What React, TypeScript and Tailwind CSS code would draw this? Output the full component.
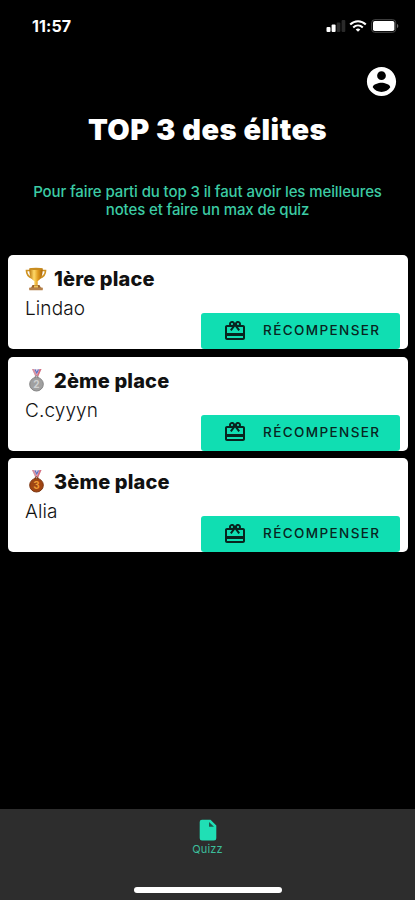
import type { ReactNode } from 'react'

type Place = {
  title: string
  name: string
  icon: ReactNode
}

function TrophyIcon() {
  return (
    <svg viewBox="0 0 22 24" className="h-6 w-[22px]" aria-hidden="true">
      <defs>
        <linearGradient id="cup" x1="0" x2="1" y1="0" y2="0">
          <stop offset="0" stopColor="#b8740a" />
          <stop offset="0.35" stopColor="#ffd968" />
          <stop offset="0.65" stopColor="#e09a1c" />
          <stop offset="1" stopColor="#a86408" />
        </linearGradient>
      </defs>
      <path d="M5 3.500H1.500c0 3.700 2 6.500 6 7.700M17 3.500h3.500c0 3.700-2 6.500-6 7.700" fill="none" stroke="#cf9322" strokeWidth="1.700" />
      <path d="M4.300 1.500h13.400c0 7-1.500 10.500-5 12.500v4.500H9.300V14C5.800 12 4.300 8.500 4.300 1.500z" fill="url(#cup)" />
      <ellipse cx="11" cy="1.900" rx="6.600" ry="1.100" fill="#c98d20" />
      <path d="M7.500 18h7l1.500 3H6z" fill="#9a6228" />
      <rect x="4.200" y="20.600" width="13.600" height="2.700" rx="0.600" fill="#b5804a" />
      <rect x="9" y="18.500" width="4" height="2" fill="#f0c35a" />
    </svg>
  )
}

function MedalIcon({ rank, fill, rim, ink }: { rank: string; fill: string; rim: string; ink: string }) {
  return (
    <svg viewBox="0 0 22 24" className="h-6 w-[22px]" aria-hidden="true">
      <path d="M7 0h9.500l-3.700 8h-2.300z" fill="#dcd3e6" />
      <path d="M7 0h2l3 6-1.300 2z" fill="#d9929f" />
      <path d="M14.500 0h2l-3.500 8-1-2z" fill="#d7707f" />
      <path d="M10 0.500l1.800 3.500 1.700-3.500" fill="none" stroke="#5f6fc0" strokeWidth="1.200" />
      <circle cx="11.500" cy="8.300" r="1.500" fill="none" stroke={rim} strokeWidth="1" />
      <circle cx="11.500" cy="15.200" r="6.800" fill={fill} stroke={rim} strokeWidth="1" />
      <text x="11.500" y="18.800" textAnchor="middle" fontSize="10" fontWeight="700" fontFamily="Inter, sans-serif" fill={ink}>
        {rank}
      </text>
    </svg>
  )
}

const places: Place[] = [
  { title: '1ère place', name: 'Lindao', icon: <TrophyIcon /> },
  { title: '2ème place', name: 'C.cyyyn', icon: <MedalIcon rank="2" fill="#a0a0a0" rim="#858585" ink="#d0d0d0" /> },
  { title: '3ème place', name: 'Alia', icon: <MedalIcon rank="3" fill="#a04512" rim="#7c3510" ink="#ef9a35" /> },
]

function StatusBar() {
  return (
    <div className="flex h-[52px] items-center justify-between pr-4 pl-8">
      <span className="text-[16px] leading-5 font-bold tracking-[0.1px]">11:57</span>
      <div className="flex items-center">
        <svg viewBox="0 0 20 14" className="h-3.5 w-5" fill="#fff" aria-hidden="true">
          <rect x="0.500" y="8" width="4" height="5" rx="1" />
          <rect x="5.600" y="5.500" width="4" height="7.500" rx="1" />
          <rect x="10.700" y="3.500" width="3.700" height="9.500" rx="1" fill="#2a2a2a" />
          <rect x="15.600" y="1" width="3.700" height="12" rx="1" fill="#2a2a2a" />
        </svg>
        <svg viewBox="0 0 18 14" className="ml-[3px] h-3.5 w-[18px]" fill="none" stroke="#fff" strokeWidth="2.100" aria-hidden="true">
          <path d="M1.200 5.400c4.500-4.300 11.100-4.300 15.600 0" />
          <path d="M4.200 8.400c2.800-2.600 6.800-2.600 9.600 0" />
          <path d="M9 12.800L6.700 10.500c1.400-1.200 3.200-1.200 4.600 0z" fill="#fff" stroke="none" />
        </svg>
        <svg viewBox="0 0 28 14" className="ml-1 h-3.5 w-7" aria-hidden="true">
          <rect x="0.700" y="0.700" width="24" height="12.600" rx="3" fill="none" stroke="#4b4b4b" />
          <rect x="2" y="2" width="21.400" height="10" rx="1.800" fill="#fff" />
          <path d="M26 5c1.700.5 1.700 3.500 0 4z" fill="#666" />
        </svg>
      </div>
    </div>
  )
}

function GiftIcon() {
  return (
    <svg viewBox="0 0 24 24" className="size-6" fill="currentColor" aria-hidden="true">
      <path d="M20 6h-2.180c.11-.31.18-.65.18-1 0-1.660-1.340-3-3-3-1.050 0-1.960.54-2.500 1.350l-.5.670-.5-.680C10.960 2.540 10.050 2 9 2 7.340 2 6 3.340 6 5c0 .35.07.69.18 1H4c-1.110 0-1.990.89-1.990 2L2 19c0 1.110.89 2 2 2h16c1.110 0 2-.89 2-2V8c0-1.110-.89-2-2-2zm-5-2c.55 0 1 .45 1 1s-.45 1-1 1-1-.45-1-1 .45-1 1-1zM9 4c.55 0 1 .45 1 1s-.45 1-1 1-1-.45-1-1 .45-1 1-1zm11 15H4v-2h16v2zm0-5H4V8h5.080L7 10.830 8.620 12 11 8.760l1-1.360 1 1.360L15.380 12 17 10.830 14.920 8H20v6z" />
    </svg>
  )
}

function PlaceCard({ title, name, icon }: Place) {
  return (
    <article className="flex h-[94px] flex-col overflow-hidden rounded-[5px] bg-white pr-2 pl-[17px] text-[#111]">
      <h2 className="mt-3 flex h-6 items-center gap-[7px] text-[20px] font-extrabold tracking-[0.15px]">
        {icon}
        {title}
      </h2>
      <p className="mt-[6px] h-[16px] text-[19px] leading-6 font-light tracking-[0.1px] text-[#111]">{name}</p>
      <button
        type="button"
        className="flex h-9 w-[199px] shrink-0 items-center self-end rounded-[3px] bg-[#10deb2] pb-px pl-[22px] text-[#08251f]"
      >
        <GiftIcon />
        <span className="ml-4 text-[13.5px] font-medium tracking-[1.4px]">RÉCOMPENSER</span>
      </button>
    </article>
  )
}

export default function App() {
  return (
    <div className="flex h-[900px] w-[415px] flex-col bg-black font-['Inter',sans-serif] text-white">
      <StatusBar />
      <header className="flex h-[61px] justify-end pt-3 pr-4">
        <button type="button" aria-label="Profil" className="size-[35px]">
          <svg viewBox="0 0 24 24" className="size-[35px]" fill="currentColor">
            <path d="M12 2C6.480 2 2 6.480 2 12s4.480 10 10 10 10-4.480 10-10S17.520 2 12 2zm0 3c1.660 0 3 1.340 3 3s-1.340 3-3 3-3-1.340-3-3 1.340-3 3-3zm0 14.200c-2.500 0-4.710-1.280-6-3.220.03-1.990 4-3.080 6-3.080 1.990 0 5.970 1.090 6 3.080-1.290 1.940-3.500 3.220-6 3.220z" />
          </svg>
        </button>
      </header>
      <h1 className="text-center text-[29px] leading-[34px] font-black tracking-[0.5px]">TOP 3 des élites</h1>
      <p className="mt-9 text-center text-[15px] leading-[18px] font-medium tracking-[-0.11px] text-[#3ccba4]">
        Pour faire parti du top 3 il faut avoir les meilleures
        <br />
        notes et faire un max de quiz
      </p>
      <main className="mt-[36px] flex flex-1 flex-col gap-[7.5px] pr-[7px] pl-2">
        {places.map((place) => (
          <PlaceCard key={place.title} {...place} />
        ))}
      </main>
      <nav className="flex h-[91px] flex-col items-center bg-[#2d2d2d] pt-2.5 text-[#20dfb5]">
        <svg viewBox="0 0 18 22" className="h-[22px] w-[18px]" aria-hidden="true">
          <path d="M3 0.800h8.500L17.300 6.500v12.700a2.300 2.300 0 0 1-2.300 2.300H3A2.300 2.300 0 0 1 .7 19.200V3.100A2.300 2.300 0 0 1 3 .8z" fill="currentColor" />
          <path d="M10 3v4.800h5z" fill="#20584b" />
        </svg>
        <span className="mt-px text-[11px] leading-[14px] tracking-[0.2px] text-[#3cbd9b]">Quizz</span>
        <div className="mt-auto mb-[7px] h-1.5 w-[148px] rounded-full bg-white" />
      </nav>
    </div>
  )
}
